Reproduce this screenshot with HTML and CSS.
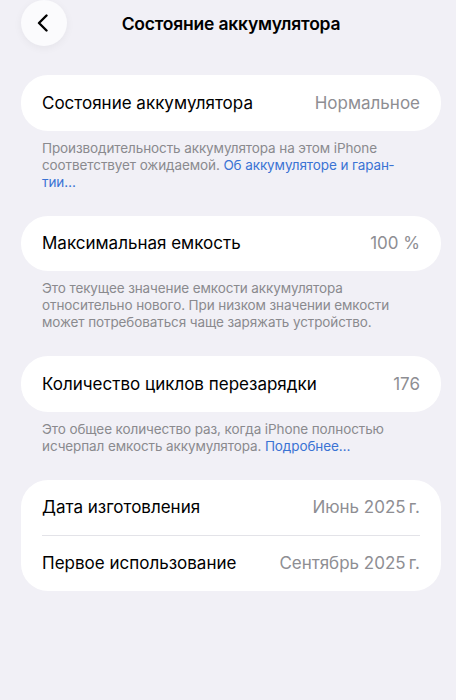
FILE: index.html
```html
<!DOCTYPE html>
<html lang="ru">
<head>
	<meta charset="UTF-8">
	<title>Состояние аккумулятора</title>
	<link rel="stylesheet" href="styles.css">
</head>
<body>
	<div class="nav">
		<a class="back" href="#">
			<svg width="14" height="18" viewBox="0 0 14 18"><path d="M10.5 1.5 3 9l7.5 7.5" fill="none" stroke="#000" stroke-width="2.4" stroke-linecap="round" stroke-linejoin="round"/></svg>
		</a>
		<h1>Состояние аккумулятора</h1>
		<span></span>
	</div>

	<div class="group">
		<div class="row"><span>Состояние аккумулятора</span><span class="val">Нормальное</span></div>
	</div>
	<p class="note">Производительность аккумулятора на этом iPhone соответствует ожидаемой. <a href="#">Об аккумуляторе и гаран­тии…</a></p>

	<div class="group">
		<div class="row"><span>Максимальная емкость</span><span class="val">100&nbsp;%</span></div>
	</div>
	<p class="note">Это текущее значение емкости аккумулятора относительно нового. При низком значении емкости может потребоваться чаще заряжать устройство.</p>

	<div class="group">
		<div class="row"><span>Количество циклов перезарядки</span><span class="val">176</span></div>
	</div>
	<p class="note">Это общее количество раз, когда iPhone полностью исчерпал емкость аккумулятора. <a href="#">Подробнее…</a></p>

	<div class="group">
		<div class="row"><span>Дата изготовления</span><span class="val">Июнь 2025&#8201;г.</span></div>
		<div class="row"><span>Первое использование</span><span class="val">Сентябрь 2025&#8201;г.</span></div>
	</div>
</body>
</html>
```
FILE: styles.css
```css
*{
	margin:0;
	padding:0;
	box-sizing:border-box;
}
body{
	background:#f1f0f6;
	font-family:Inter,"Liberation Sans","Noto Sans CJK SC",sans-serif;
	color:#000;
	width:456px;
	padding:0 15px 0 21px;
}
.nav{
	height:46px;
	display:grid;
	grid-template-columns:46px 1fr 46px;
	align-items:center;
	margin-bottom:29px;
}
.back{
	width:46px;
	height:46px;
	border-radius:50%;
	background:#fbfbfd;
	box-shadow:0 2px 8px rgba(0,0,0,.05);
	display:flex;
	align-items:center;
	justify-content:center;
	padding-right:2px;
}
.nav h1{
	text-align:center;
	font-size:17.5px;
	font-weight:600;
	letter-spacing:-.2px;
}
.group{
	background:#fff;
	border-radius:27px;
	padding:0 21px;
}
.row{
	height:55.5px;
	display:flex;
	align-items:center;
	justify-content:space-between;
	font-size:17px;
	letter-spacing:0;
}
.row + .row{
	border-top:1px solid #e3e3e8;
}
.val{
	color:#8e8e93;
}
.note{
	padding:9px 21px 0;
	margin-bottom:25px;
	font-size:13.5px;
	line-height:17px;
	color:#8a8a8e;
	letter-spacing:-.1px;
}
.note a{
	color:#3a73d4;
	text-decoration:none;
}
```
